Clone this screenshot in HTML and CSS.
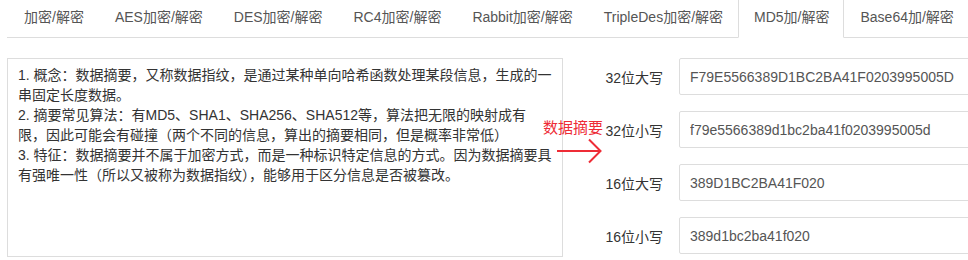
FILE: index.html
```html
<!DOCTYPE html>
<html lang="zh-CN">
<head>
<meta charset="utf-8">
<title>MD5加/解密</title>
<link rel="stylesheet" href="styles.css">
</head>
<body>
<div class="page">
  <ul class="tabs">
    <li class="tab"><a>加密/解密</a></li>
    <li class="tab"><a>AES加密/解密</a></li>
    <li class="tab"><a>DES加密/解密</a></li>
    <li class="tab"><a>RC4加密/解密</a></li>
    <li class="tab"><a>Rabbit加密/解密</a></li>
    <li class="tab"><a>TripleDes加密/解密</a></li>
    <li class="tab active"><a>MD5加/解密</a></li>
    <li class="tab"><a>Base64加/解密</a></li>
  </ul>
  <div class="main">
    <div class="desc">
      <p>1. 概念：数据摘要，又称数据指纹，是通过某种单向哈希函数处理某段信息，生成的一串固定长度数据。</p>
      <p>2. 摘要常见算法：有MD5、SHA1、SHA256、SHA512等，算法把无限的映射成有限，因此可能会有碰撞（两个不同的信息，算出的摘要相同，但是概率非常低）</p>
      <p>3. 特征：数据摘要并不属于加密方式，而是一种标识特定信息的方式。因为数据摘要具有强唯一性（所以又被称为数据指纹），能够用于区分信息是否被篡改。</p>
    </div>
    <div class="form">
      <div class="row"><label class="label">32位大写</label><input class="field" type="text" value="F79E5566389D1BC2BA41F0203995005D"></div>
      <div class="row"><label class="label">32位小写</label><input class="field" type="text" value="f79e5566389d1bc2ba41f0203995005d"></div>
      <div class="row"><label class="label">16位大写</label><input class="field" type="text" value="389D1BC2BA41F020"></div>
      <div class="row"><label class="label">16位小写</label><input class="field" type="text" value="389d1bc2ba41f020"></div>
    </div>
    <div class="note">数据摘要</div>
    <svg class="arrow" width="50" height="28" viewBox="0 0 50 28">
      <line x1="2" y1="14" x2="45" y2="14" stroke="#ee2c36" stroke-width="2"/>
      <polyline points="34,2.5 45.5,14 34,25.5" fill="none" stroke="#ee2c36" stroke-width="2"/>
    </svg>
  </div>
</div>
</body>
</html>
```

FILE: styles.css
```css
html, body {
  margin: 0;
  padding: 0;
  background: #fff;
  overflow: hidden;
}
body {
  font-family: "Liberation Sans", "Noto Sans CJK SC", sans-serif;
  font-size: 14px;
  color: #333;
}
.page {
  padding-left: 7px;
}
.tabs {
  list-style: none;
  margin: -4px 0 0 0;
  padding: 0 0 0 1px;
  display: flex;
  border-bottom: 1px solid #ddd;
  white-space: nowrap;
}
.tab {
  margin-bottom: -1px;
}
.tab a {
  display: block;
  margin-right: 0;
  padding: 10px 14px 10px 15px;
  line-height: 20px;
  border: 1px solid transparent;
  border-radius: 4px 4px 0 0;
  color: #555;
}
.tab.active a {
  border-color: #ddd;
  border-bottom-color: #fff;
  background: #fff;
}
.main {
  position: relative;
  display: flex;
  margin-top: 20px;
}
.desc {
  box-sizing: border-box;
  width: 556px;
  height: 199px;
  flex: none;
  border: 1px solid #ddd;
  padding: 6px 10px;
  line-height: 20px;
  color: #333;
}
.desc p {
  margin: 0;
}
.form {
  margin-left: 30px;
  flex: none;
}
.row {
  display: flex;
  align-items: center;
  height: 37px;
  margin-bottom: 16px;
}
.label {
  width: 70px;
  margin-right: 16px;
  text-align: right;
  color: #333;
}
.field {
  box-sizing: border-box;
  width: 330px;
  height: 37px;
  padding: 0 10px;
  border: 1px solid #ddd;
  border-radius: 2px;
  font-family: "Liberation Sans", "Noto Sans CJK SC", sans-serif;
  font-size: 14px;
  color: #555;
  outline: none;
}
.note {
  position: absolute;
  left: 536px;
  top: 60px;
  font-size: 15px;
  line-height: 20px;
  color: #ee2c36;
  white-space: nowrap;
}
.arrow {
  position: absolute;
  left: 548px;
  top: 79px;
}
```
